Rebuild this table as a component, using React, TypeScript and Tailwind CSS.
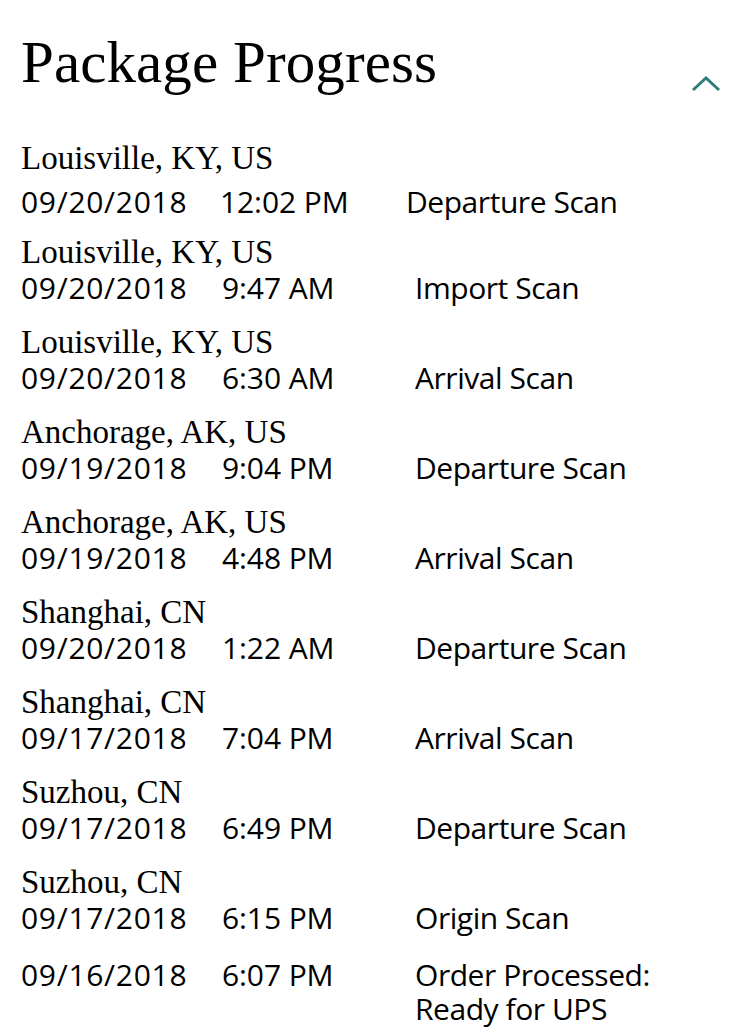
import React from "react";

type Entry = { loc?: string; date: string; time: string; status: string };

const entries: Entry[] = [
  { loc: "Louisville, KY, US", date: "09/20/2018", time: "12:02 PM", status: "Departure Scan" },
  { loc: "Louisville, KY, US", date: "09/20/2018", time: "9:47 AM", status: "Import Scan" },
  { loc: "Louisville, KY, US", date: "09/20/2018", time: "6:30 AM", status: "Arrival Scan" },
  { loc: "Anchorage, AK, US", date: "09/19/2018", time: "9:04 PM", status: "Departure Scan" },
  { loc: "Anchorage, AK, US", date: "09/19/2018", time: "4:48 PM", status: "Arrival Scan" },
  { loc: "Shanghai, CN", date: "09/20/2018", time: "1:22 AM", status: "Departure Scan" },
  { loc: "Shanghai, CN", date: "09/17/2018", time: "7:04 PM", status: "Arrival Scan" },
  { loc: "Suzhou, CN", date: "09/17/2018", time: "6:49 PM", status: "Departure Scan" },
  { loc: "Suzhou, CN", date: "09/17/2018", time: "6:15 PM", status: "Origin Scan" },
];

const serif = "font-['Liberation_Serif','Times_New_Roman',serif]";
const sans = "font-['Open_Sans','Noto_Sans',sans-serif]";

export default function App() {
  return (
    <div className="w-[750px] min-h-[1033px] bg-white text-black">
      <div className="flex items-start justify-between pl-[21px] pr-[29px] pt-[29px]">
        <h1 className={`${serif} text-[59px] leading-[66px] tracking-[0.1px]`}>Package Progress</h1>
        <svg width="30" height="16" viewBox="0 0 30 16" className="mt-[47px]" aria-hidden="true">
          <polyline points="2,14 15,2 28,14" fill="none" stroke="#2f7d78" strokeWidth="3" />
        </svg>
      </div>

      <div className="mt-[45px] px-[21px]">
        {/* first entry */}
        <div className="mb-[14px]">
          <div className={`${serif} text-[33px] leading-[36px]`}>{entries[0].loc}</div>
          <div className={`${sans} mt-[8px] flex text-[30px] leading-[36px]`}>
            <span className="w-[199px] tracking-[0.7px]">{entries[0].date}</span>
            <span className="w-[186px] tracking-[-0.1px]">{entries[0].time}</span>
            <span className="tracking-[-0.45px]">{entries[0].status}</span>
          </div>
        </div>

        {entries.slice(1).map((e, i) => (
          <div key={i} className="mb-[18px]">
            <div className={`${serif} text-[33px] leading-[36px]`}>{e.loc}</div>
            <div className={`${sans} flex text-[30px] leading-[36px]`}>
              <span className="w-[201px] tracking-[0.7px]">{e.date}</span>
              <span className="w-[193px] tracking-[-0.1px]">{e.time}</span>
              <span className="tracking-[-0.45px]">{e.status}</span>
            </div>
          </div>
        ))}

        <div className={`${sans} mt-[22px] flex text-[30px] leading-[34px]`}>
          <span className="w-[201px] tracking-[0.7px]">09/16/2018</span>
          <span className="w-[193px] tracking-[-0.1px]">6:07 PM</span>
          <span className="tracking-[-0.45px]">
            Order Processed:
            <br />
            Ready for UPS
          </span>
        </div>
      </div>
    </div>
  );
}
